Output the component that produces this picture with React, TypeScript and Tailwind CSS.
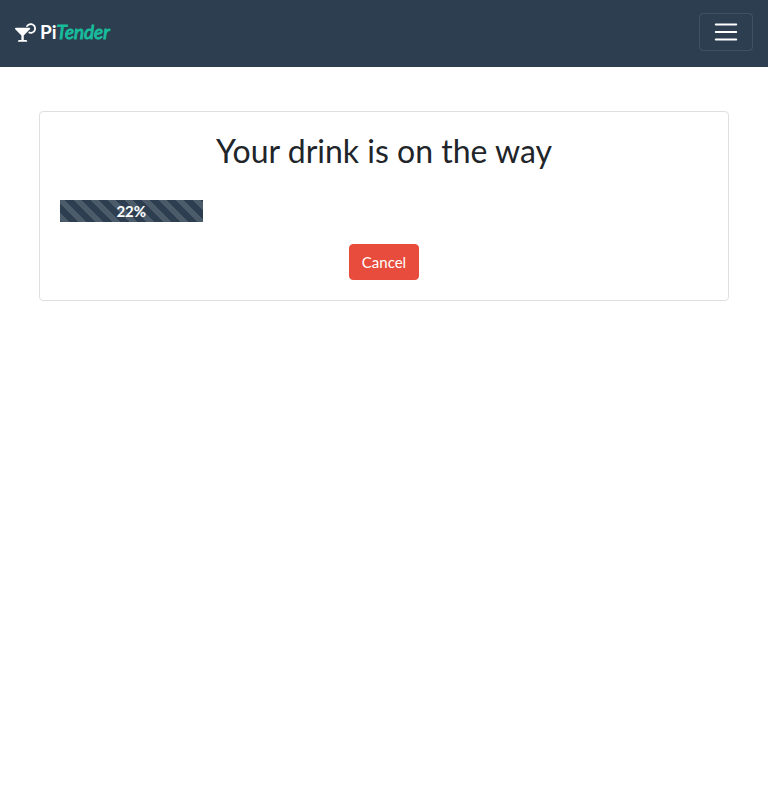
import { FaCocktail } from "react-icons/fa";

function Navbar() {
  return (
    <nav className="flex h-[67px] items-start justify-between bg-[#2c3e50] px-[15px] pt-[13px]">
      <a href="#" className="flex items-center pt-[5px] text-[19px] leading-7 text-white">
        <FaCocktail className="mr-1 h-[19px] w-[21px]" aria-hidden="true" />
        <span className="font-bold">Pi</span>
        <em className="font-normal text-[#18bc9c] [-webkit-text-stroke:1px_#18bc9c]">Tender</em>
      </a>
      <button
        type="button"
        aria-label="Toggle navigation"
        className="flex h-[38px] w-[54px] items-center justify-center rounded border border-white/10"
      >
        <svg viewBox="0 0 30 30" className="size-7" aria-hidden="true">
          <path
            d="M4 7h22M4 15h22M4 23h22"
            stroke="#fff"
            strokeWidth="2"
            strokeLinecap="round"
            strokeMiterlimit="10"
          />
        </svg>
      </button>
    </nav>
  );
}

function ProgressBar({ value }: { value: number }) {
  return (
    <div
      role="progressbar"
      aria-valuenow={value}
      aria-valuemin={0}
      aria-valuemax={100}
      aria-label="Drink progress"
      className="h-[22px]"
    >
      <div
        className="flex h-full items-center justify-center bg-[#2c3e50] bg-[linear-gradient(45deg,rgba(255,255,255,.15)_25%,transparent_25%,transparent_50%,rgba(255,255,255,.15)_50%,rgba(255,255,255,.15)_75%,transparent_75%,transparent)] bg-[length:17px_17px] bg-[position:-4px_0px] text-[15px] font-bold text-white"
        style={{ width: `${value}%` }}
      >
        {value}%
      </div>
    </div>
  );
}

export default function App() {
  return (
    <div className="min-h-screen bg-white font-[Lato,sans-serif] text-[15px] text-[#212529]">
      <Navbar />
      <main className="px-[39px] pt-11">
        <section className="rounded border border-[#dfdfdf] p-5">
          <h1 className="text-center text-[32px] leading-[38px]">Your drink is on the way</h1>
          <div className="mt-[30px]">
            <ProgressBar value={22} />
          </div>
          <div className="mt-[22px] flex justify-center">
            <button
              type="button"
              className="h-9 rounded border border-[#e74c3c] bg-[#e74c3c] px-3 text-[15px] text-white"
            >
              Cancel
            </button>
          </div>
        </section>
      </main>
    </div>
  );
}
